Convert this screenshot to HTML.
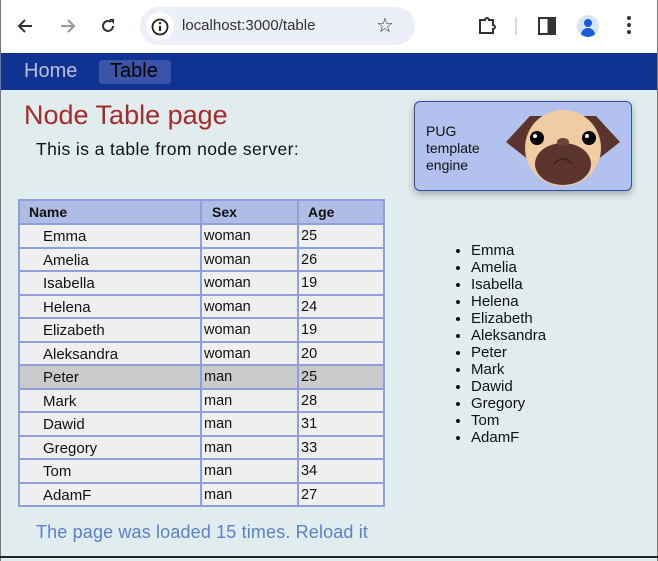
<!DOCTYPE html>
<html><head><style>
*{margin:0;padding:0;box-sizing:border-box}
body{width:658px;height:561px;background:#e1ecee;font-family:"Liberation Sans",Arial,sans-serif;position:relative;overflow:hidden}
.a{position:absolute;white-space:nowrap}
.chrome{position:absolute;left:0;top:0;width:658px;height:53px;background:#fff}
.nav{position:absolute;left:0;top:53px;width:658px;height:37px;background:#103393}
.hl{position:absolute;left:18px;width:367px;height:2px;background:#8e9fdc}
.vl{position:absolute;top:200px;width:2px;height:307px;background:#8e9fdc}
.c{position:absolute;font-size:15px;color:#111}
</style></head><body>
<div class="chrome">
<svg class="a" style="left:16px;top:16px" width="20" height="20" viewBox="0 0 20 20"><path d="M16 10H4M9 4L3 10l6 6" stroke="#333" stroke-width="2" fill="none"/></svg>
<svg class="a" style="left:57px;top:16px" width="20" height="20" viewBox="0 0 20 20"><path d="M4 10h12M11 4l6 6-6 6" stroke="#999" stroke-width="2" fill="none"/></svg>
<svg class="a" style="left:98px;top:16px" width="20" height="20" viewBox="0 0 20 20"><path d="M15 10a5 5 0 1 1-2-4" stroke="#333" stroke-width="2" fill="none"/><path d="M11 3h5v5z" fill="#333"/></svg>
<div class="a" style="left:140px;top:7px;width:275px;height:38px;border-radius:19px;background:#edeff8"></div>
<div class="a" style="left:146px;top:12px;width:28px;height:28px;border-radius:14px;background:#fff"></div>
<svg class="a" style="left:150px;top:17px" width="20" height="20" viewBox="0 0 20 20"><circle cx="10" cy="10" r="7.5" stroke="#222" stroke-width="1.8" fill="none"/><path d="M10 9v5" stroke="#222" stroke-width="2"/><circle cx="10" cy="6.3" r="1.2" fill="#222"/></svg>
<div class="a" style="left:182px;top:17px;font-size:15px;color:#333">localhost:3000/table</div>
<div class="a" style="left:376px;top:13px;font-size:20px;color:#333">☆</div>
<svg class="a" style="left:476px;top:15px" width="22" height="22" viewBox="0 0 22 22"><path d="M4 5h5a2 2 0 0 1 4 0h4v5a2 2 0 0 1 0 4v4H4z" stroke="#333" stroke-width="2" fill="none"/></svg>
<div class="a" style="left:515px;top:17px;width:2px;height:18px;background:#d0dcf0"></div>
<div class="a" style="left:538px;top:17px;width:18px;height:18px;border:2px solid #333;background:linear-gradient(90deg,#fff 55%,#333 55%)"></div>
<div class="a" style="left:577px;top:15px;width:22px;height:22px;border-radius:11px;background:#d6e3fb;overflow:hidden"><div class="a" style="left:7px;top:4px;width:8px;height:8px;border-radius:4px;background:#1a5ed6"></div><div class="a" style="left:4px;top:13px;width:14px;height:10px;border-radius:7px 7px 0 0;background:#1a5ed6"></div></div>
<div class="a" style="left:627px;top:16px;width:4px;height:4px;border-radius:2px;background:#333;box-shadow:0 7px #333,0 14px #333"></div>
</div>
<div class="nav">
<div class="a" style="left:24px;top:7px;font-size:20px;color:#b9c0d6">Home</div>
<div class="a" style="left:99px;top:7px;width:72px;height:24px;border-radius:3px;background:#3a54a9"></div>
<div class="a" style="left:110px;top:7px;font-size:20px;color:#000">Table</div>
</div>
<div class="a" style="left:0;top:0;width:1px;height:561px;background:#777"></div>
<div class="a" style="left:657px;top:0;width:1px;height:561px;background:#777"></div>
<div class="a" style="left:24px;top:100px;font-size:27px;color:#a52a2a">Node Table page</div>
<div class="a" style="left:36px;top:139px;font-size:17.5px;color:#111;letter-spacing:0.4px">This is a table from node server:</div>
<div class="a" style="left:414px;top:101px;width:218px;height:90px;background:#b2c1ed;border:1px solid #2d4fa5;border-radius:6px;box-shadow:0 3px 8px rgba(0,0,0,.3)"></div>
<div class="a" style="left:426px;top:123px;font-size:14px;line-height:17px;color:#111">PUG<br>template<br>engine</div>
<svg class="a" style="left:504px;top:108px" width="118" height="80" viewBox="0 0 118 80">
<path d="M2 34 L26 8 L44 8 L30 56 Z" fill="#5b352d"/>
<path d="M116 34 L92 8 L74 8 L88 56 Z" fill="#5b352d"/>
<ellipse cx="59" cy="40" rx="38" ry="38" fill="#efcca2"/>
<ellipse cx="59" cy="56" rx="28" ry="21" fill="#5b352d"/>
<ellipse cx="59" cy="34" rx="6" ry="4" fill="#6e443a"/>
<circle cx="33" cy="30" r="7" fill="#000"/><circle cx="31" cy="28" r="2" fill="#fff"/>
<circle cx="85" cy="30" r="7" fill="#000"/><circle cx="83" cy="28" r="2" fill="#fff"/>
<path d="M50 56 Q59 46 68 56" stroke="#3a1f1a" stroke-width="1.5" fill="none"/>
</svg>
<div class="a" style="left:18px;top:200px;width:367px;height:24px;background:#afbde6"></div>
<div class="a" style="left:18px;top:224px;width:367px;height:282px;background:#efefef"></div>
<div class="a" style="left:18px;top:365px;width:367px;height:23px;background:#cbcbcb"></div>
<div class="hl" style="top:199px"></div><div class="hl" style="top:223px"></div><div class="hl" style="top:247px"></div><div class="hl" style="top:270px"></div><div class="hl" style="top:294px"></div><div class="hl" style="top:317px"></div><div class="hl" style="top:341px"></div><div class="hl" style="top:364px"></div><div class="hl" style="top:388px"></div><div class="hl" style="top:411px"></div><div class="hl" style="top:435px"></div><div class="hl" style="top:458px"></div><div class="hl" style="top:482px"></div><div class="hl" style="top:505px"></div>
<div class="vl" style="left:18px"></div><div class="vl" style="left:200px"></div><div class="vl" style="left:297px"></div><div class="vl" style="left:383px"></div>
<div class="c" style="left:29px;top:204px;font-size:14px;font-weight:bold">Name</div>
<div class="c" style="left:212px;top:204px;font-size:14px;font-weight:bold">Sex</div>
<div class="c" style="left:308px;top:204px;font-size:14px;font-weight:bold">Age</div>
<div id="rows"></div>
<script>
var d=[["Emma","woman",25],["Amelia","woman",26],["Isabella","woman",19],["Helena","woman",24],["Elizabeth","woman",19],["Aleksandra","woman",20],["Peter","man",25],["Mark","man",28],["Dawid","man",31],["Gregory","man",33],["Tom","man",34],["AdamF","man",27]];
var h="";d.forEach(function(r,i){var t=228+i*23.5;h+='<div class="c" style="left:43px;top:'+t+'px">'+r[0]+'</div><div class="c" style="left:204px;top:'+t+'px;font-size:14.5px">'+r[1]+'</div><div class="c" style="left:301px;top:'+t+'px;font-size:14.5px">'+r[2]+'</div>';});
document.getElementById("rows").innerHTML=h;
</script>
<ul class="a" style="left:471px;top:242px;font-size:15px;line-height:17px;color:#111;list-style:disc">
<li>Emma</li><li>Amelia</li><li>Isabella</li><li>Helena</li><li>Elizabeth</li><li>Aleksandra</li><li>Peter</li><li>Mark</li><li>Dawid</li><li>Gregory</li><li>Tom</li><li>AdamF</li>
</ul>
<div class="a" style="left:36px;top:522px;font-size:18px;color:#5a7fcb;letter-spacing:0.15px">The page was loaded 15 times. Reload it</div>
<div class="a" style="left:0;top:556px;width:658px;height:2px;background:#222"></div>
</body></html>
